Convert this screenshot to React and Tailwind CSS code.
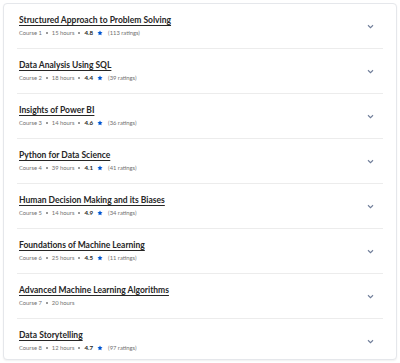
import React from "react";

const courses = [
  { title: "Structured Approach to Problem Solving", hours: 15, rating: "4.8", count: 113 },
  { title: "Data Analysis Using SQL", hours: 18, rating: "4.4", count: 39 },
  { title: "Insights of Power BI", hours: 14, rating: "4.6", count: 36 },
  { title: "Python for Data Science", hours: 39, rating: "4.1", count: 41 },
  { title: "Human Decision Making and its Biases", hours: 14, rating: "4.9", count: 34 },
  { title: "Foundations of Machine Learning", hours: 25, rating: "4.5", count: 11 },
  { title: "Advanced Machine Learning Algorithms", hours: 20 },
  { title: "Data Storytelling", hours: 12, rating: "4.7", count: 97 },
];

function Chevron() {
  return (
    <svg width="7" height="5" viewBox="0 0 8 6" className="text-[#6f7d99]">
      <path d="M1 1.5 L4 4.5 L7 1.5" fill="none" stroke="currentColor" strokeWidth="1.3" />
    </svg>
  );
}

function Star() {
  return (
    <svg width="6" height="6" viewBox="0 0 24 24" className="text-[#0056d2]">
      <path fill="currentColor" d="M12 2l3.09 6.26L22 9.27l-5 4.87 1.18 6.88L12 17.77l-6.18 3.25L7 14.14 2 9.27l6.91-1.01L12 2z" />
    </svg>
  );
}

function Dot() {
  return <span className="mx-[4px] inline-block w-[2px] h-[2px] rounded-full bg-[#7a7a7a]" />;
}

export default function App() {
  return (
    <div className="bg-white p-[3px]" style={{ fontFamily: "Lato, 'Liberation Sans', sans-serif" }}>
      <div className="rounded-[4px] border border-[#e5e7eb] bg-white shadow-[0_1px_2px_rgba(0,0,0,0.06)] h-[357px] px-[13px]">
        {courses.map((c, i) => (
          <div
            key={i}
            className={`flex items-center justify-between h-[45px] pl-[2px] pr-[9px] ${i < courses.length - 1 ? "border-b border-[#ececec]" : ""}`}
          >
            <div className="flex flex-col self-start pt-[10px]">
              <div className="text-[8.5px] leading-[12px] font-bold text-[#262626] underline underline-offset-[1.5px] decoration-[1px]">
                {c.title}
              </div>
              <div className="flex items-center text-[5.8px] leading-[9px] text-[#707070] mt-[2px]">
                <span>Course {i + 1}</span>
                <Dot />
                <span>{c.hours} hours</span>
                {c.rating && (
                  <>
                    <Dot />
                    <span className="font-bold text-[#262626] text-[6.2px]">{c.rating}</span>
                    <span className="ml-[4px] mr-[5px] flex items-center"><Star /></span>
                    <span>({c.count} ratings)</span>
                  </>
                )}
              </div>
            </div>
            <Chevron />
          </div>
        ))}
      </div>
    </div>
  );
}
